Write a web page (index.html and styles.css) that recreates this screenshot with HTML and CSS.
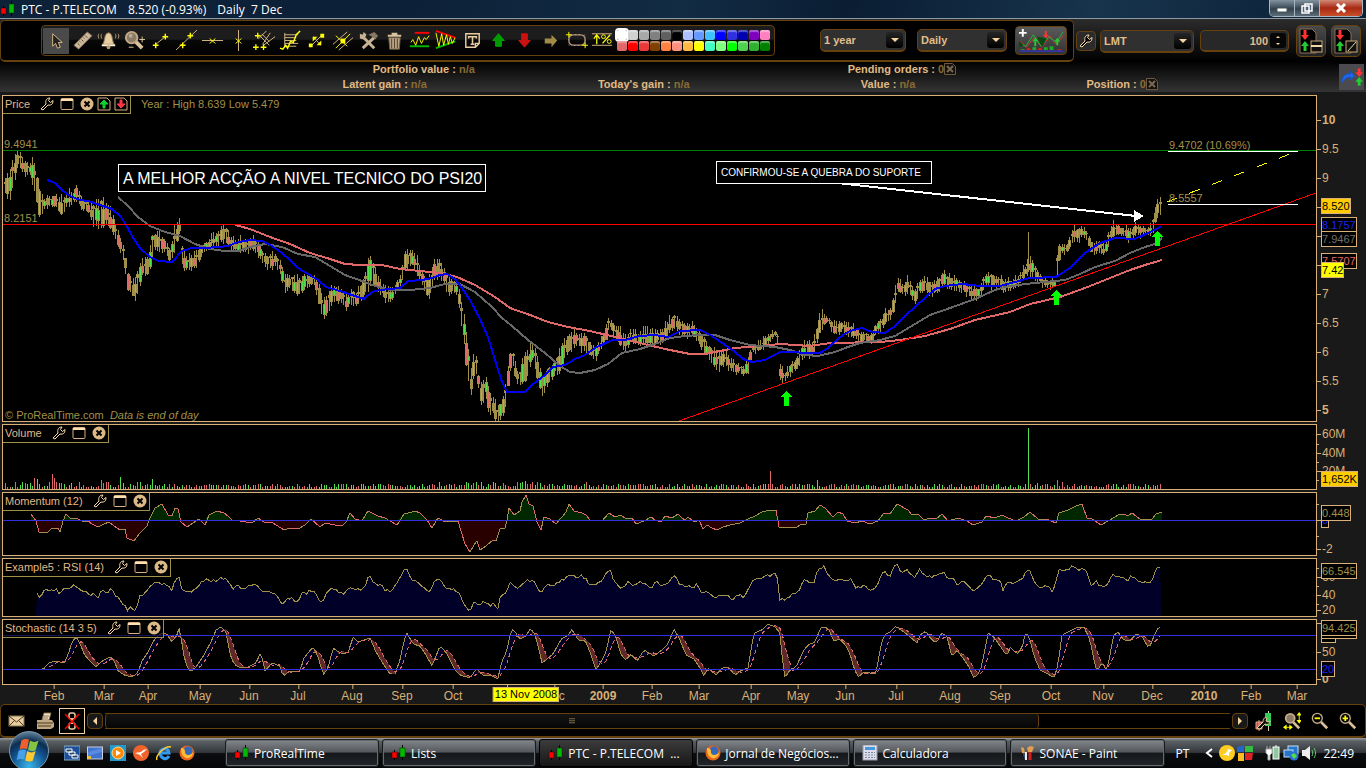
FILE: index.html
```html
<!DOCTYPE html>
<html lang="en">
<head>
    <meta charset="UTF-8">
    <meta name="viewport" content="width=device-width, initial-scale=1.0">
    <title>PTC - P.TELECOM</title>
    <link rel="stylesheet" href="styles.css">
</head>
<body>
    <!-- icon set -->
    <svg class="icon-defs" width="0" height="0" aria-hidden="true">
        <symbol id="i-app" viewBox="0 0 16 16"><path d="M3.5 5v10M11.5 0v15" stroke="#000"/><rect x="1" y="7" width="5" height="6" fill="#f00" stroke="#300" stroke-width=".5"/><rect x="9" y="3" width="5" height="9" fill="#0b0" stroke="#030" stroke-width=".5"/></symbol>
        <symbol id="i-cursor" viewBox="0 0 24 24"><path d="M8 5v13l3-3 2 5 3-1-2-5h4z" fill="#222" stroke="#d8b888"/></symbol>
        <symbol id="i-ruler" viewBox="0 0 24 24"><path d="M3 17L17 3l5 4L8 21z" fill="#cdb79a" stroke="#74624a"/><path d="M7 15l2 2M9 13l1 1M11 11l2 2M13 9l1 1M15 7l2 2" stroke="#443"/></symbol>
        <symbol id="i-bell" viewBox="0 0 24 24"><path d="M12 4c-5 1-3 7-6 12h12c-3-5-1-11-6-12z" fill="#e8cda0" stroke="#8a7355"/><path d="M5 17h14" stroke="#fff0d0" stroke-width="2"/><circle cx="12" cy="19" r="2" fill="#b89a70"/><path d="M5 5c-1 1-1 3 0 5M2 5c-1 1-1 3 0 5M19 5c1 1 1 3 0 5M22 5c1 1 1 3 0 5" fill="none" stroke="#b89a70"/></symbol>
        <symbol id="i-lens" viewBox="0 0 24 24"><path d="M13 13l7 7" stroke="#d9c09a" stroke-width="4"/><circle cx="9" cy="9" r="6" fill="#8b7a66" stroke="#c4ab88" stroke-width="2"/><circle cx="8" cy="7" r="2" fill="#bbaa90"/><path d="M20 8v6M17 11h6M6 19h5" stroke="#e8cda0"/></symbol>
        <symbol id="i-seg" viewBox="0 0 24 24"><path d="M7 16L17 8" stroke="#d8b888"/><path d="M4 17h6M7 14v6M14 8h6M17 5v6" stroke="#ff0" stroke-width="1.5"/></symbol>
        <symbol id="i-line" viewBox="0 0 24 24"><path d="M1 22L23 1" stroke="#d8b888"/><path d="M5 17h6M8 14v6M13 7h6M16 4v6" stroke="#ff0" stroke-width="1.5"/></symbol>
        <symbol id="i-hline" viewBox="0 0 24 24"><path d="M1 12h22" stroke="#d8b888"/><path d="M9 10l6 5M9 15l6-5" stroke="#ff0"/></symbol>
        <symbol id="i-vline" viewBox="0 0 24 24"><path d="M12 1v22" stroke="#d8b888"/><path d="M9 10l6 5M9 15l6-5" stroke="#ff0"/></symbol>
        <symbol id="i-fork" viewBox="0 0 24 24"><path d="M6 10L14 2M8 8l9 9M11 17L23 8M9 5l8 8M10 16L18 4" stroke="#d8b888"/><path d="M2 7h6M5 4v6M0 19h6M3 16v6M8 19h6M11 16v6" stroke="#ff0" stroke-width="1.4"/></symbol>
        <symbol id="i-note" viewBox="0 0 24 24"><path d="M6 6h14M6 9h12M6 12h12M6 15h14M6 18h12M6 4v15" stroke="#d8b888"/><path d="M1 20l3 1 3-4 2 3 3-7 3 1 3-8 4-4" fill="none" stroke="#ff0" stroke-width="1.5"/></symbol>
        <symbol id="i-arrows" viewBox="0 0 24 24"><path d="M6 18L18 6M9 8l7 9" stroke="#d8b888"/><path d="M4 15h4v4H4zM16 5h4v4h-4zM8 8h5l-5 5zM12 17l5-5v5z" fill="#ff0"/></symbol>
        <symbol id="i-channel" viewBox="0 0 24 24"><path d="M2 16L17 3M8 22L23 9" stroke="#d8b888"/><path d="M5 20L20 5M5 7l12 11" stroke="#ff0"/><path d="M10 10h5v5h-5z" fill="#ff0"/></symbol>
        <symbol id="i-tools" viewBox="0 0 24 24"><path d="M5 7l13 13M19 8L6 20" stroke="#c9b396" stroke-width="3"/><path d="M3 5l3 1 1-3 3 3-3 5-4-1z" fill="#c9b396"/><path d="M12 6l6-3 4 4-3 4-3-3z" fill="#877765"/></symbol>
        <symbol id="i-trash" viewBox="0 0 24 24"><path d="M6 9h12l-1 12H7z" fill="#b7a184" stroke="#6a5a44"/><path d="M9 10v10M12 10v10M15 10v10" stroke="#54452f"/><path d="M5 7h14M9 5h6" stroke="#d9c2a0" stroke-width="2"/></symbol>
        <symbol id="i-support" viewBox="0 0 24 24"><path d="M6 4h15" stroke="#f00" stroke-width="2"/><path d="M1 18h20" stroke="#0b0" stroke-width="2"/><path d="M2 14l2-3 3 6 3-9 3 7 3-6 2 2 3-4" fill="none" stroke="#ff0"/></symbol>
        <symbol id="i-triangle" viewBox="0 0 24 24"><path d="M1 2l20 7" stroke="#f00" stroke-width="2"/><path d="M1 20l20-7" stroke="#0b0" stroke-width="2"/><path d="M1 4l3 14L7 5l2 12 3-11 2 10 2-8 2 7 3-6" fill="none" stroke="#ff0"/></symbol>
        <symbol id="i-text" viewBox="0 0 24 24"><path d="M5 5h14v10l-4 4H5zM19 15h-4v4" fill="none" stroke="#e8cda0" stroke-width="1.5"/><path d="M8 10V8h8v2M12 8v8M10 16h4" fill="none" stroke="#e8cda0" stroke-width="1.6"/></symbol>
        <symbol id="i-up" viewBox="0 0 24 24"><path d="M12 5l6 7h-3v6H9v-6H6z" fill="#090" stroke="#0a0"/></symbol>
        <symbol id="i-down" viewBox="0 0 24 24"><path d="M12 19l6-7h-3V5H9v7H6z" fill="#c11" stroke="#c11"/></symbol>
        <symbol id="i-right" viewBox="0 0 24 24"><path d="M19 12l-6-6v4H6v5h7v4z" fill="#a08c48"/></symbol>
        <symbol id="i-ellipse" viewBox="0 0 24 24"><rect x="4" y="6" width="17" height="11" rx="5" fill="none" stroke="#b89a80" stroke-width="1.6"/><path d="M4 6h17v11H4z" fill="none" stroke="#665544" stroke-dasharray="2"/><path d="M1 6h6M4 3v6M18 17h6M21 14v6" stroke="#ff0"/></symbol>
        <symbol id="i-percent" viewBox="0 0 24 24"><path d="M1 5h21M1 17h21" stroke="#d8b888"/><path d="M6 16V7M3 10l3-4 3 4M12 15l8-9" fill="none" stroke="#ff0" stroke-width="1.3"/><circle cx="13" cy="8" r="2" fill="none" stroke="#ff0"/><circle cx="19" cy="13" r="2" fill="none" stroke="#ff0"/></symbol>
        <symbol id="i-wrench" viewBox="0 0 14 14"><path d="M1 12l5-5c-1-4 1-6 4-6L8.500 3.500l2 2L13 3.500c0 4-2 5-5 4.500l-5 5z" fill="#000" stroke="#ffdca8"/></symbol>
        <symbol id="i-window" viewBox="0 0 14 14"><rect x="1" y="1.500" width="12" height="11" rx="1" fill="#000" stroke="#d8b080"/><path d="M1 3h12" stroke="#ffe0b0" stroke-width="2"/></symbol>
        <symbol id="i-close" viewBox="0 0 14 14"><circle cx="7" cy="7" r="6.500" fill="#dcb987"/><path d="M4.500 4.500l5 5M9.500 4.500l-5 5" stroke="#000" stroke-width="2"/></symbol>
        <symbol id="i-buy" viewBox="0 0 14 14"><path d="M1 1h9l3 3v9H1z" fill="#000" stroke="#d8b080"/><path d="M7 3l4 4H8v4H6V7H3z" fill="#1c3" stroke="#1c3"/></symbol>
        <symbol id="i-sell" viewBox="0 0 14 14"><path d="M1 1h9l3 3v9H1z" fill="#000" stroke="#d8b080"/><path d="M7 11l4-4H8V3H6v4H3z" fill="#f34" stroke="#f34"/></symbol>
        <symbol id="i-cancel" viewBox="0 0 12 12"><path d="M.5.5h8l3 3v8H.5z" fill="#15120e" stroke="#6d5a42"/><path d="M3 3l6 6M9 3L3 9" stroke="#7a6852" stroke-width="2"/></symbol>
        <symbol id="i-chart" viewBox="0 0 46 24"><path d="M0 12l8 7 8-10 8 10 8-12 7 9 7-9" fill="none" stroke="#d33"/><path d="M0 15l7 3 8-12 8 12 8-10 8 6 7-11" fill="none" stroke="#2b3"/><path d="M19 8l5 11 5-9zM0 12l5 5-5 2z" fill="#064a12"/><path d="M28 2v5" stroke="#f33" stroke-width="2"/><path d="M25 6h6l-3 4z" fill="#f33"/><path d="M17 18v-5M40 17v-5" stroke="#2c3" stroke-width="2"/><path d="M14 13h6l-3-4zM37 13h6l-3-4z" fill="#2c3"/><path d="M4 22v-1M16 22v-3M34 22v-4M28 22v-3" stroke="#2a2" stroke-width="4"/><path d="M10 22v-2M22 22v-2M42 22v-1" stroke="#d22" stroke-width="4"/><path d="M0 23h46" stroke="#33f"/><path d="M4 0v8M0 4h8" stroke="#fff" stroke-width="2"/></symbol>
        <symbol id="i-order" viewBox="0 0 24 26"><path d="M1 1h12l4 4v20H1z" fill="#000" stroke="#8a7050"/><path d="M6 2v5" stroke="#f33" stroke-width="3"/><path d="M2 7h8l-4 5z" fill="#f33"/><path d="M6 23v-5" stroke="#2c3" stroke-width="3"/><path d="M2 18h8l-4-5z" fill="#2c3"/></symbol>
        <symbol id="i-trade" viewBox="0 0 24 24"><path d="M2 18c0-8 5-10 9-9V6l4 5-4 4v-3c-4 0-6 2-9 6z" fill="#26e" stroke="#15c"/><path d="M20 3v5" stroke="#f33" stroke-width="3"/><path d="M16 7h8l-4 5z" fill="#f33"/><path d="M20 21v-5" stroke="#2c3" stroke-width="3"/><path d="M16 17h8l-4-5z" fill="#2c3"/></symbol>
        <symbol id="i-mail" viewBox="0 0 18 18"><rect x="1" y="4" width="15" height="10" fill="#e8cda0" stroke="#8c7450"/><path d="M1 4l7.500 6L16 4M1 14l5-5M16 14l-5-5" fill="none" stroke="#4a3a20"/></symbol>
        <symbol id="i-print" viewBox="0 0 18 18"><path d="M6 8l2-7h7l-2 7z" fill="#f5e4c8" stroke="#86704e"/><path d="M8 4h5M7 6h5" stroke="#86704e"/><path d="M1 8h15l2 3v4l-3 2H1z" fill="#c0a884"/><path d="M1 11h16M2 14h13" stroke="#4a3a20"/></symbol>
        <symbol id="i-unlink" viewBox="0 0 18 18"><rect x="6" y="1" width="6" height="6" rx="2" fill="none" stroke="#e8cda0" stroke-width="1.500"/><rect x="6" y="11" width="6" height="6" rx="2" fill="none" stroke="#e8cda0" stroke-width="1.500"/><path d="M9 6v6" stroke="#e8cda0" stroke-width="2"/><path d="M2 2l14 15M16 2L2 17" stroke="#f00" stroke-width="1.300"/></symbol>
        <symbol id="i-candles" viewBox="0 0 18 20"><path d="M13.500 0v20" stroke="#e8cda0"/><path d="M10 2h6v13h-6z" fill="#3c5"/><path d="M1 11h6v7H1zM4 9v11" fill="#c55" stroke="#d8a888"/><path d="M2 17l6-6c0-4 2-5 4-4l-1 3 2 1 2-1c0 3-2 4-5 3l-5 5z" fill="#111" stroke="#e8cda0"/></symbol>
        <symbol id="i-fit" viewBox="0 0 20 20"><path d="M11 11l7 7" stroke="#d9c09a" stroke-width="3"/><circle cx="8" cy="7" r="5" fill="#8b7a66" stroke="#c4ab88" stroke-width="2"/><path d="M18 2v8M1 17h8" stroke="#ff0"/><path d="M15 4l3-4 3 4zM15 9l3 4 3-4zM4 14l-4 3 4 3zM7 14l4 3-4 3z" fill="#ff0"/></symbol>
        <symbol id="i-zoomout" viewBox="0 0 20 20"><path d="M11 11l7 7" stroke="#d9c09a" stroke-width="3"/><circle cx="7" cy="7" r="5.500" fill="#000" stroke="#c4ab88" stroke-width="1.500"/><path d="M4 7h6" stroke="#ff0" stroke-width="2"/></symbol>
        <symbol id="i-zoomin" viewBox="0 0 20 20"><path d="M11 11l7 7" stroke="#d9c09a" stroke-width="3"/><circle cx="7" cy="7" r="5.500" fill="#000" stroke="#c4ab88" stroke-width="1.500"/><path d="M4 7h6M7 4v6" stroke="#ff0" stroke-width="2"/></symbol>
        <symbol id="i-flag" viewBox="0 0 40 40"><path d="M12 9c3-2 6-2 8-1l-2 10c-3-1-6-1-8 1z" fill="#f0602a"/><path d="M21 9c3 2 6 2 9 0l-3 10c-2 2-5 1-8 0z" fill="#86c440"/><path d="M9 20c3-2 6-2 8-1l-2 10c-3-1-6-1-8 1z" fill="#4aa0e8"/><path d="M18 20c3 2 6 2 9 0l-3 10c-2 2-5 1-8 0z" fill="#fcc830"/></symbol>
        <symbol id="i-switch" viewBox="0 0 16 16"><rect width="16" height="14" y="1" fill="#1c4f9c" stroke="#8ab"/><path d="M2 4h6v3H2zM5 7h6v3H5zM8 10h6v3H8z" fill="#246" stroke="#fff"/></symbol>
        <symbol id="i-desktop" viewBox="0 0 16 16"><rect x=".5" y="2" width="15" height="12" fill="#3d74d0" stroke="#ccd"/><path d="M1 7l14-4v4L1 11z" fill="#5a8ae0"/><path d="M1 11h3v3H1z" fill="#eb3"/></symbol>
        <symbol id="i-wmp" viewBox="0 0 16 16"><rect width="16" height="16" fill="#29c"/><circle cx="8" cy="8" r="6" fill="#f80" stroke="#fd9"/><path d="M6 5l5 3-5 3z" fill="#fff"/></symbol>
        <symbol id="i-kite" viewBox="0 0 16 16"><circle cx="8" cy="8" r="8" fill="#f0632a"/><path d="M2 8c4-1 6 0 8-3l4-1-3 3-3 2 2 4-3-3z" fill="#fff"/></symbol>
        <symbol id="i-ie" viewBox="0 0 16 16"><path d="M13 11c-3 5-9 2-9-3s8-6 9 0H5" fill="none" stroke="#39e" stroke-width="3"/><path d="M1 15C-1 11 9 0 15 2" fill="none" stroke="#fc3" stroke-width="1.500"/></symbol>
        <symbol id="i-firefox" viewBox="0 0 16 16"><circle cx="8" cy="8" r="7.500" fill="#e8641c"/><circle cx="9" cy="6" r="4.500" fill="#3468b8"/><path d="M2 3c3 0 4 1 4 4 0 4 6 4 8 0 0 5-4 7-7 6S2 9 2 3z" fill="#fb3"/></symbol>
        <symbol id="i-calc" viewBox="0 0 16 16"><rect x="1" width="14" height="15" fill="#dde" stroke="#99a"/><rect x="3" y="2" width="10" height="3" fill="#49d"/><path d="M3 7.500h10M3 10h10M3 12.500h10" stroke="#789" stroke-dasharray="2 1"/></symbol>
        <symbol id="i-paint" viewBox="0 0 16 16"><path d="M4 6l3 9" stroke="#357" stroke-width="2"/><path d="M11 7v8" stroke="#c22" stroke-width="3"/><path d="M2 2l3 1 1 5H3zM9 7L8 3l3-2 4 1-2 5z" fill="#e0a050"/><path d="M7 7v8" stroke="#eee" stroke-width="2"/></symbol>
        <symbol id="i-globe" viewBox="0 0 16 16"><circle cx="8" cy="8" r="8" fill="#fc2"/><path d="M3 10c4-1 5-3 6-6l4 1-3 3v3l-3-1z" fill="#fff"/></symbol>
        <symbol id="i-squares" viewBox="0 0 16 16"><path d="M0 2l7-2v7H0z" fill="#26c"/><path d="M8 1h8v6H8z" fill="#3b4"/><path d="M1 8h6v8H1z" fill="#fb2"/><path d="M8 8h8l-1 7H8z" fill="#d22"/></symbol>
        <symbol id="i-power" viewBox="0 0 16 16"><rect x="8" y="2" width="6" height="12" fill="#8fc89f" stroke="#fff"/><path d="M10 1h2" stroke="#fff"/><path d="M1 4h6v4l-2 2v5H3v-5L1 8zM2 1v3M5 1v3" fill="#fff" stroke="#aaa"/></symbol>
        <symbol id="i-net" viewBox="0 0 16 16"><rect x="5" y="1" width="10" height="8" fill="#27c" stroke="#cde"/><rect x="1" y="5" width="9" height="7" fill="#27c" stroke="#cde"/><circle cx="11" cy="11" r="4.500" fill="#2a6fd0"/><path d="M8 10l3-2 3 3-3 3z" fill="#5d4"/></symbol>
        <symbol id="i-sound" viewBox="0 0 16 16"><path d="M1 5h3l5-4v14l-5-4H1z" fill="#eee"/><path d="M11 5c1 2 1 4 0 6M13 3c2 3 2 7 0 10" fill="none" stroke="#6c7"/></symbol>
    </svg>

    <header class="titlebar">
        <svg class="ic16"><use href="#i-app"/></svg>
        <h1 class="title">PTC - P.TELECOM <span>8.520 (-0.93%)</span> <span>Daily&nbsp; 7 Dec</span></h1>
        <div class="win-buttons">
            <button class="win-min" aria-label="Minimize"><svg width="12" height="9"><rect x="1" y="4" width="10" height="4" fill="#fff" stroke="#455"/></svg></button>
            <button class="win-max" aria-label="Restore"><svg width="12" height="11"><path d="M4 1h7v7H4zM1 3h7v7H1z" fill="#567" stroke="#fff" stroke-width="1.5"/></svg></button>
            <button class="win-close" aria-label="Close"><svg width="12" height="10"><path d="M2 1l8 8M10 1L2 9" stroke="#fff" stroke-width="3"/></svg></button>
        </div>
    </header>

    <div class="toolbar">
        <div class="tool-group">
            <div class="tool-strip">
                <button class="tool active" aria-label="Select"><svg><use href="#i-cursor"/></svg></button>
                <button class="tool" aria-label="Ruler"><svg><use href="#i-ruler"/></svg></button>
                <button class="tool" aria-label="Alert"><svg><use href="#i-bell"/></svg></button>
                <button class="tool" aria-label="Zoom"><svg><use href="#i-lens"/></svg></button>
                <button class="tool" aria-label="Segment"><svg><use href="#i-seg"/></svg></button>
                <button class="tool" aria-label="Line"><svg><use href="#i-line"/></svg></button>
                <button class="tool" aria-label="Horizontal line"><svg><use href="#i-hline"/></svg></button>
                <button class="tool" aria-label="Vertical line"><svg><use href="#i-vline"/></svg></button>
                <button class="tool" aria-label="Pitchfork"><svg><use href="#i-fork"/></svg></button>
                <button class="tool" aria-label="Fibonacci"><svg><use href="#i-note"/></svg></button>
                <button class="tool" aria-label="Projection"><svg><use href="#i-arrows"/></svg></button>
                <button class="tool" aria-label="Channel"><svg><use href="#i-channel"/></svg></button>
                <button class="tool" aria-label="Settings"><svg><use href="#i-tools"/></svg></button>
                <button class="tool" aria-label="Delete"><svg><use href="#i-trash"/></svg></button>
                <button class="tool" aria-label="Supports"><svg><use href="#i-support"/></svg></button>
                <button class="tool" aria-label="Triangle"><svg><use href="#i-triangle"/></svg></button>
                <button class="tool" aria-label="Text"><svg><use href="#i-text"/></svg></button>
                <button class="tool" aria-label="Up arrow"><svg><use href="#i-up"/></svg></button>
                <button class="tool" aria-label="Down arrow"><svg><use href="#i-down"/></svg></button>
                <button class="tool" aria-label="Right arrow"><svg><use href="#i-right"/></svg></button>
                <button class="tool" aria-label="Ellipse"><svg><use href="#i-ellipse"/></svg></button>
                <button class="tool" aria-label="Percent"><svg><use href="#i-percent"/></svg></button>
                <div class="swatches" id="swatches"></div>
            </div>
            <label class="pick pick-year"><select aria-label="Period"><option>1 year</option></select></label>
            <label class="pick pick-unit"><select aria-label="Time unit"><option>Daily</option></select></label>
            <button class="chart-button" aria-label="Indicators"><svg><use href="#i-chart"/></svg></button>
        </div>
        <div class="order-group">
            <button class="wrench-button" aria-label="Order settings"><svg><use href="#i-wrench"/></svg></button>
            <label class="pick pick-type"><select aria-label="Order type"><option>LMT</option></select></label>
            <label class="qty"><input type="text" value="100" aria-label="Quantity"><span class="spin"></span></label>
            <button class="order-button" aria-label="Close order"><svg><use href="#i-order"/><rect x="12" y="13" width="11" height="11" fill="#111" stroke="#c9a878"/><path d="M12 18h11" stroke="#f0d8a8" stroke-width="2"/></svg></button>
            <button class="order-button" aria-label="Edit order"><svg><use href="#i-order"/><rect x="12" y="13" width="11" height="11" fill="#111" stroke="#c9a878"/><path d="M14 23l8-9" stroke="#f0d8a8"/></svg></button>
        </div>
    </div>

    <div class="summary">
        <div class="summary-rows">
            <div class="summary-row">
                <span>Portfolio value : <i>n/a</i></span>
                <span>Pending orders : <i>0</i><svg><use href="#i-cancel"/></svg></span>
            </div>
            <div class="summary-row">
                <span></span>
                <span>Latent gain : <i>n/a</i></span>
                <span>Today's gain : <i>n/a</i></span>
                <span>Value : <i>n/a</i></span>
                <span>Position : <i>0</i><svg><use href="#i-cancel"/></svg></span>
            </div>
        </div>
        <button class="trade-button" aria-label="Trade"><svg><use href="#i-trade"/></svg></button>
    </div>

    <main class="charts">
        <section class="row row-price">
            <div class="panel">
                <svg class="plot" id="price" viewBox="3 96 1313 325" preserveAspectRatio="none"></svg>
                <div class="panel-head">
                    <h2>Price</h2>
                    <svg><use href="#i-wrench"/></svg><svg><use href="#i-window"/></svg><svg><use href="#i-close"/></svg><svg class="tight"><use href="#i-buy"/></svg><svg class="tight"><use href="#i-sell"/></svg>
                </div>
                <span class="note olive" data-x="141" data-y="98">Year : High 8.639 Low 5.479</span>
                <span class="note olive" data-x="4" data-y="138">9.4941</span>
                <span class="note olive" data-x="4" data-y="212">8.2151</span>
                <span class="note olive" data-x="1169" data-y="139">9.4702 (10.69%)</span>
                <span class="note olive" data-x="1169" data-y="192">8.5557</span>
                <span class="note boxed big" data-x="118" data-y="164">A MELHOR ACÇÃO A NIVEL TECNICO DO PSI20</span>
                <span class="note boxed" data-x="716" data-y="161">CONFIRMOU-SE A QUEBRA DO SUPORTE</span>
                <span class="note olive" data-x="5" data-y="409">© ProRealTime.com&nbsp; <em>Data is end of day</em></span>
            </div>
            <div class="axis" data-top="95" data-height="327" data-ticks="120:10:b 149:9.5 178:9 207: 236: 265: 294:7 323:6.5 352:6 381:5.5 410:5:b" data-badges="206:8.520:orange 225:8.1757:blue 239:7.9467:gray 261:7.5707:pink 270:7.42:yellow"></div>
        </section>
        <section class="row row-volume">
            <div class="panel">
                <svg class="plot" id="volume" viewBox="3 425 1313 64" preserveAspectRatio="none"></svg>
                <div class="panel-head"><h2>Volume</h2><svg><use href="#i-wrench"/></svg><svg><use href="#i-window"/></svg><svg><use href="#i-close"/></svg></div>
            </div>
            <div class="axis" data-top="424" data-height="66" data-ticks="434:60M 444::s 453:40M 462::s 471:20M 480::s" data-badges="479:1,652K:orange"></div>
        </section>
        <section class="row row-momentum">
            <div class="panel">
                <svg class="plot" id="momentum" viewBox="3 493 1313 62" preserveAspectRatio="none"></svg>
                <div class="panel-head"><h2>Momentum (12)</h2><svg><use href="#i-wrench"/></svg><svg><use href="#i-window"/></svg><svg><use href="#i-close"/></svg></div>
            </div>
            <div class="axis" data-top="492" data-height="64" data-ticks="504::s 520: 536::s 549:-2" data-badges="520:0:blue 513:0.448:olive"></div>
        </section>
        <section class="row row-rsi">
            <div class="panel">
                <svg class="plot" id="rsi" viewBox="3 559 1313 57" preserveAspectRatio="none"></svg>
                <div class="panel-head"><h2>Example5 : RSI (14)</h2><svg><use href="#i-wrench"/></svg><svg><use href="#i-window"/></svg><svg><use href="#i-close"/></svg></div>
            </div>
            <div class="axis" data-top="558" data-height="59" data-ticks="568::s 577:60 586::s 595:40 604::s 610:20" data-badges="571:66.545:olive"></div>
        </section>
        <section class="row row-stoch">
            <div class="panel">
                <svg class="plot" id="stoch" viewBox="3 620 1313 64" preserveAspectRatio="none"></svg>
                <div class="panel-head"><h2>Stochastic (14 3 5)</h2><svg><use href="#i-wrench"/></svg><svg><use href="#i-window"/></svg><svg><use href="#i-close"/></svg></div>
            </div>
            <div class="axis" data-top="619" data-height="66" data-ticks="623: 652:50 679:0:b" data-badges="635::short 631::long 628:94.425:olive 669:20:blue"></div>
        </section>
        <div class="time-axis" id="timeAxis"></div>
    </main>

    <div class="bottombar">
        <button class="bb" aria-label="Mail"><svg><use href="#i-mail"/></svg></button>
        <button class="bb" aria-label="Print"><svg><use href="#i-print"/></svg></button>
        <button class="bb framed" aria-label="Unlink"><svg><use href="#i-unlink"/></svg></button>
        <div class="scroll">
            <button class="scroll-arrow left" aria-label="Scroll left"></button>
            <div class="scroll-track"><div class="scroll-thumb"><span></span></div></div>
            <button class="scroll-arrow right" aria-label="Scroll right"></button>
        </div>
        <button class="bb" aria-label="Chart style"><svg><use href="#i-candles"/></svg></button>
        <button class="bb" aria-label="Fit"><svg><use href="#i-fit"/></svg></button>
        <button class="bb" aria-label="Zoom out"><svg><use href="#i-zoomout"/></svg></button>
        <button class="bb" aria-label="Zoom in"><svg><use href="#i-zoomin"/></svg></button>
    </div>

    <footer class="taskbar">
        <button class="start" aria-label="Start"><svg><use href="#i-flag"/></svg></button>
        <div class="quick">
            <svg class="ic16"><use href="#i-switch"/></svg><svg class="ic16"><use href="#i-desktop"/></svg><svg class="ic16"><use href="#i-wmp"/></svg><svg class="ic16"><use href="#i-kite"/></svg><svg class="ic16"><use href="#i-ie"/></svg><svg class="ic16"><use href="#i-firefox"/></svg>
        </div>
        <div class="tasks">
            <button class="task"><svg class="ic16"><use href="#i-app"/></svg>ProRealTime</button>
            <button class="task"><svg class="ic16"><use href="#i-app"/></svg>Lists</button>
            <button class="task current"><svg class="ic16"><use href="#i-app"/></svg>PTC - P.TELECOM &nbsp;...</button>
            <button class="task"><svg class="ic16"><use href="#i-firefox"/></svg>Jornal de Negócios...</button>
            <button class="task"><svg class="ic16"><use href="#i-calc"/></svg>Calculadora</button>
            <button class="task"><svg class="ic16"><use href="#i-paint"/></svg>SONAE - Paint</button>
        </div>
        <div class="tray">
            <span class="lang">PT</span>
            <svg class="chev" width="8" height="10"><path d="M7 1L2 5l5 4" fill="none" stroke="#fff" stroke-width="2"/></svg>
            <svg class="ic16"><use href="#i-globe"/></svg><svg class="ic16"><use href="#i-squares"/></svg>
            <svg class="ic16 sep"><use href="#i-power"/></svg><svg class="ic16"><use href="#i-net"/></svg><svg class="ic16"><use href="#i-sound"/></svg>
            <span class="clock">22:49</span>
        </div>
    </footer>
    <script src="charts.js"></script>
</body>
</html>
```
FILE: styles.css
```css
* {
    margin: 0;
    padding: 0;
    box-sizing: border-box;
}
body {
    display: flex;
    flex-direction: column;
    height: 100vh;
    min-height: 640px;
    background: #191919;
    color: #d8b078;
    font: 11px "Liberation Sans", Arial, sans-serif;
    overflow: hidden;
}
button {
    background: none;
    border: none;
    color: inherit;
    font: inherit;
}
svg {
    display: block;
    flex: none;
}
.icon-defs {
    position: absolute;
}
.ic16 {
    width: 16px;
    height: 16px;
}

/* title bar */
.titlebar {
    display: flex;
    align-items: center;
    height: 19px;
    background: linear-gradient(100deg, #0d2238 0%, #0c2138 30%, #122c44 50%, #0a1d33 62%, #17344c 80%, #0b1f35 100%);
    border-bottom: 1px solid #8d9aa5;
}
.title {
    flex: 1;
    margin-left: 5px;
    color: #fff;
    font: 12px "Open Sans", "Segoe UI", sans-serif;
}
.title span {
    margin-left: 8px;
}
.win-buttons {
    display: flex;
    align-self: flex-start;
    height: 17px;
    margin-right: 3px;
    border: 1px solid #a9b5bf;
    border-top: none;
    border-radius: 0 0 5px 5px;
    overflow: hidden;
}
.win-buttons button {
    display: flex;
    align-items: center;
    justify-content: center;
    width: 25px;
    background: linear-gradient(#8493a0, #33424f 55%, #5d6c79);
    border-right: 1px solid #a9b5bf;
}
.win-buttons .win-close {
    width: 42px;
    border: none;
    background: linear-gradient(#d08a78, #a82812 50%, #c8502c);
}

/* toolbar */
.toolbar {
    display: flex;
    height: 43px;
    padding-top: 1px;
    background: linear-gradient(#2c2c2c, #000);
}
.tool-group {
    display: flex;
    align-items: center;
    width: 1074px;
    padding: 0 6px 0 40px;
    background: #000;
    border: 1px solid #65410f;
    border-bottom-width: 2px;
    border-radius: 5px;
}
.tool-strip {
    display: flex;
    align-items: center;
    height: 31px;
    padding: 0 4px 0 1px;
    background: linear-gradient(#1c1c1c 45%, #080808 50%, #000);
    border: 1px solid #65410f;
    border-radius: 4px;
}
.tool {
    display: flex;
    align-items: center;
    justify-content: center;
    width: 26px;
    height: 26px;
}
.tool.active {
    background: #4a4a4a;
}
.tool svg {
    width: 23px;
    height: 23px;
}
.swatches {
    display: grid;
    grid-template-columns: repeat(14, 10px);
    gap: 1px;
    margin-left: 2px;
}
.swatch {
    height: 10px;
    border-radius: 2px;
    box-shadow: inset 0 2px 1px rgba(255, 255, 255, .35);
}
.swatch.chosen {
    outline: 2px solid #fff;
}
.pick {
    position: relative;
    height: 23px;
    border: 1px solid #65410f;
    border-bottom-width: 2px;
    border-radius: 5px;
    background: #303030;
}
.pick select {
    width: 100%;
    height: 100%;
    padding-left: 3px;
    appearance: none;
    background: none;
    border: none;
    color: #e2bd88;
    font: bold 11px "Liberation Sans", Arial, sans-serif;
}
.pick::before {
    content: "";
    position: absolute;
    top: 2px;
    right: 2px;
    width: 17px;
    height: 16px;
    background: linear-gradient(#252525, #000);
    border-radius: 3px;
    pointer-events: none;
}
.pick::after {
    content: "";
    position: absolute;
    top: 8px;
    right: 6px;
    border: 4px solid transparent;
    border-top-color: #f5d5a0;
    border-bottom: none;
    pointer-events: none;
}
.pick-year {
    width: 86px;
    margin-left: auto;
}
.pick-unit {
    width: 90px;
    margin: 0 8px 0 11px;
}
.pick-type {
    width: 94px;
    margin: 0 6px 0 4px;
}
.chart-button {
    padding: 2px;
    background: linear-gradient(#5a5a5a, #333);
    border: 1px solid #65410f;
    border-radius: 4px;
}
.chart-button svg {
    width: 46px;
    height: 23px;
}
.order-group {
    display: flex;
    align-items: center;
    flex: 1;
    padding-left: 2px;
}
.wrench-button {
    padding: 2px;
    background: #2b2b2b;
    border: 1px solid #65410f;
    border-radius: 4px;
}
.wrench-button svg {
    width: 14px;
    height: 14px;
}
.qty {
    display: flex;
    align-items: center;
    width: 89px;
    height: 22px;
    margin-right: 7px;
    padding-right: 2px;
    background: #282828;
    border: 1px solid #65410f;
    border-bottom-width: 2px;
    border-radius: 5px;
}
.qty input {
    flex: 1;
    min-width: 0;
    padding-right: 2px;
    background: none;
    border: none;
    color: #e2bd88;
    font: bold 11px "Liberation Sans", Arial, sans-serif;
    text-align: right;
}
.spin {
    display: flex;
    flex-direction: column;
    align-items: center;
    justify-content: space-around;
    width: 16px;
    height: 15px;
    background: #060606;
    border-radius: 3px;
}
.spin::before,
.spin::after {
    content: "";
    border: 2px solid transparent;
    border-bottom-color: #f5d5a0;
    border-top: none;
}
.spin::after {
    border-top: 2px solid #f5d5a0;
    border-bottom: none;
}
.order-button {
    margin-right: 5px;
    padding: 2px;
    background: linear-gradient(#4a4a4a, #222);
    border: 1px solid #65410f;
    border-radius: 5px;
}
.order-button svg {
    width: 24px;
    height: 26px;
}

/* account summary */
.summary {
    display: flex;
    height: 30px;
    background: linear-gradient(#020202, #343434);
}
.summary-rows {
    flex: 1;
    padding-right: 8px;
}
.summary-row {
    display: flex;
    justify-content: space-evenly;
    height: 15px;
    color: #e0ba84;
    font-size: 11px;
    font-weight: bold;
    line-height: 15px;
}
.summary-row span {
    display: flex;
    white-space: pre;
}
.summary-row i {
    color: #8a6b32;
    font-style: normal;
}
.summary-row svg {
    width: 12px;
    height: 12px;
    margin-top: 1px;
}
.trade-button {
    align-self: flex-end;
    margin: 0 2px 2px;
    padding: 1px;
    background: #4b4b4f;
}
.trade-button svg {
    width: 23px;
    height: 24px;
}

/* charts */
.charts {
    display: flex;
    flex: 1;
    flex-direction: column;
    gap: 2px;
    min-height: 0;
    padding: 3px 0 0 2px;
}
.row {
    display: grid;
    grid-template-columns: 1fr 49px;
    grid-template-rows: 100%;
}
.row-price {
    flex: 1;
    min-height: 0;
}
.row-volume,
.row-stoch {
    height: 66px;
}
.row-momentum {
    height: 64px;
}
.row-rsi {
    height: 59px;
}
.panel {
    position: relative;
    background: #000;
    border: 1px solid #d8b078;
}
.plot {
    width: 100%;
    height: 100%;
    shape-rendering: crispEdges;
}
.panel-head {
    position: absolute;
    top: 0;
    left: 0;
    display: flex;
    align-items: center;
    height: 18px;
    padding: 0 2px 1px;
    background: rgba(0, 0, 0, .6);
    border: solid #a09048;
    border-width: 0 1px 1px 0;
}
.panel-head h2 {
    margin-right: 4px;
    color: #e0b888;
    font-size: 11px;
    font-weight: normal;
}
.panel-head svg {
    width: 14px;
    height: 14px;
    margin-left: 6px;
}
.panel-head .tight {
    margin-left: 3px;
}
.note {
    position: absolute;
    white-space: nowrap;
    font-size: 11px;
    line-height: 13px;
}
.olive {
    color: #a09048;
}
.boxed {
    padding: 4px 10px 4px 4px;
    background: #000;
    border: 1px solid #fff;
    color: #fff;
    font-size: 10px;
}
.boxed.big {
    padding: 4px 3px 2px 4px;
    font-size: 16px;
    line-height: 20px;
}
.axis {
    position: relative;
    overflow: hidden;
}
.tick,
.badge {
    position: absolute;
    left: 0;
    padding-left: 5px;
    font-size: 12px;
    line-height: 14px;
    min-height: 14px;
    transform: translateY(-50%);
}
.tick::before {
    content: "";
    position: absolute;
    top: 7px;
    left: 0;
    width: 4px;
    height: 1px;
    background: #d8b078;
}
.tick.s::before {
    width: 2px;
}
.tick.b {
    font-weight: bold;
}
.badge {
    left: 4px;
    min-height: 16px;
    padding: 0;
    background: #000;
    border: 1px solid #d8b078;
    font-size: 11px;
}
.badge.orange {
    background: #fc0;
    color: #000;
}
.badge.yellow {
    background: #ff0;
    color: #000;
}
.badge.blue {
    color: #22e;
}
.badge.gray {
    color: #707070;
}
.badge.pink {
    color: #e06868;
}
.badge.short {
    width: 15px;
}
.badge.long {
    width: 36px;
}
.time-axis {
    position: relative;
    height: 19px;
    margin: -2px 50px 0 0;
}
.month {
    position: absolute;
    top: 0;
    padding-top: 4px;
    transform: translateX(-50%);
    font-size: 12px;
    line-height: 15px;
}
.month::before {
    content: "";
    position: absolute;
    top: 0;
    left: 50%;
    width: 1px;
    height: 4px;
    background: #d8b078;
}
.month.year {
    font-weight: bold;
}
.month.date {
    top: 2px;
    padding: 0 1px;
    background: #ff0;
    border: 1px solid #d8b078;
    color: #000;
    font-size: 11px;
    line-height: 13px;
    white-space: nowrap;
}
.month.date::before {
    display: none;
}

/* bottom bar */
.bottombar {
    display: flex;
    align-items: center;
    height: 34px;
    padding: 0 3px 0 2px;
    background: #000;
    border: 1px solid #65410f;
    border-bottom-width: 2px;
    border-radius: 5px;
}
.bb {
    display: flex;
    align-items: center;
    justify-content: center;
    width: 28px;
    height: 26px;
}
.bb svg {
    width: 18px;
    height: 20px;
}
.bb.framed {
    width: 26px;
    border: 1px solid #f0cfa0;
}
.scroll {
    display: flex;
    align-items: center;
    flex: 1;
    gap: 2px;
    margin: 0 2px;
}
.scroll-arrow {
    display: flex;
    align-items: center;
    justify-content: center;
    width: 16px;
    height: 16px;
    background: #181818;
    border: 1px solid #65410f;
    border-radius: 4px;
}
.scroll-arrow::before {
    content: "";
    border: 4px solid transparent;
    border-right-color: #f5d5a0;
    border-left: none;
}
.scroll-arrow.right::before {
    border: 4px solid transparent;
    border-left-color: #f5d5a0;
    border-right: none;
}
.scroll-track {
    flex: 1;
    height: 16px;
    border: solid #65410f;
    border-width: 1px 0;
}
.scroll-thumb {
    display: flex;
    align-items: center;
    justify-content: center;
    width: 83%;
    height: 14px;
    background: linear-gradient(#141414, #060606);
    border: solid #65410f;
    border-width: 0 1px;
    border-radius: 3px;
}
.scroll-thumb span {
    width: 6px;
    height: 6px;
    background: repeating-linear-gradient(#65522f 0 1px, #222 1px 2px);
}

/* taskbar */
.taskbar {
    position: relative;
    display: flex;
    align-items: center;
    height: 30px;
    background: linear-gradient(#9a9fa5, #5b6065 10%, #33373b 48%, #0a0c0e 52%, #050607);
    color: #fff;
    font: 12px "Open Sans", "Segoe UI", sans-serif;
}
.start {
    width: 40px;
    height: 40px;
    margin: -4px 15px 0 9px;
    border: 1px solid #7c98ac;
    border-radius: 50%;
    background: radial-gradient(circle at 50% 90%, #39b4e8, #12508c 45%, #0d2d50 65%, #8fb0c8);
}
.start svg {
    width: 38px;
    height: 38px;
}
.quick {
    display: flex;
    gap: 7px;
    width: 161px;
}
.tasks {
    display: flex;
    flex: 1;
    gap: 3px;
    align-self: stretch;
    padding: 1px 0;
}
.task {
    display: flex;
    align-items: center;
    flex: 1;
    gap: 4px;
    min-width: 0;
    padding-left: 8px;
    background: linear-gradient(#84888c, #55595d 45%, #15181b 52%, #22262a);
    border: 1px solid #1a1c1e;
    box-shadow: inset 0 0 0 1px #666b70;
    border-radius: 3px;
    white-space: nowrap;
    overflow: hidden;
}
.task.current {
    background: linear-gradient(#3c3c3c, #161616);
    box-shadow: none;
    border-color: #000;
}
.tray {
    display: flex;
    align-items: center;
    gap: 2px;
    padding: 0 12px 0 11px;
}
.lang {
    margin-right: 14px;
}
.chev {
    margin-right: 4px;
}
.sep {
    margin-left: 10px;
}
.clock {
    margin-left: 4px;
}
```
FILE: charts.js
```js
// color palette
const palette = ['#fff', '#d0d0d0', '#a8a8a8', '#808080', '#606060', '#000', '#b0c0ff', '#6699ff', '#40c0ff', '#0000ff', '#3030e0', '#0000b0', '#8000c0', '#ff80c0',
    '#e06868', '#f00', '#e83838', '#804000', '#ff8040', '#ff9080', '#ffb840', '#ff0', '#40ffc0', '#80ff80', '#0f0', '#50d050', '#30b030', '#008000'];
const swatches = document.getElementById('swatches');
palette.forEach((color, i) => {
    const b = document.createElement('button');
    b.className = i === 0 ? 'swatch chosen' : 'swatch';
    b.setAttribute('aria-label', 'Color ' + color);
    b.style.background = color;
    swatches.appendChild(b);
});

// "x,y x,y" -> [[x, y], ...]
const parse = text => text.trim().split(/\s+/).map(p => p.split(',').map(Number));

function valueAt(points, x, k = 1) {
    if (x <= points[0][0]) return points[0][k];
    for (let i = 1; i < points.length; i++) {
        const a = points[i - 1], b = points[i];
        if (x <= b[0]) return a[k] + (b[k] - a[k]) * (x - a[0]) / (b[0] - a[0] || 1);
    }
    return points[points.length - 1][k];
}

// repeatable pseudo random numbers
let seed = 7;
function rnd() {
    seed = (seed * 16807) % 2147483647;
    return seed / 2147483647;
}

function add(id, tag, attrs) {
    const el = document.createElementNS('http://www.w3.org/2000/svg', tag);
    for (const k in attrs) el.setAttribute(k, attrs[k]);
    document.getElementById(id).appendChild(el);
}
const line = (id, x1, y1, x2, y2, stroke, more) => add(id, 'line', { x1, y1, x2, y2, stroke, ...more });
const curve = (id, points, stroke, width) => add(id, 'polyline', { points: points.join(' '), fill: 'none', stroke, 'stroke-width': width });

const bars = [];
for (let x = 5; x <= 1162; x += 2.452) bars.push(x);

// daily ranges: x,high,low
const ranges = parse(`5,178,193 10,170,199 14,158,180 18,152,165 24,162,175 30,165,173 33,156,188 36,172,190 38,185,218 42,200,210 50,196,206 58,196,207 60,200,217 66,197,206 76,188,200 82,198,208 88,204,212 92,207,222 98,200,228 101,200,228 107,207,222 113,215,232 118,234,246 124,250,262 127,272,290 131,278,292 134,284,300 138,270,292 143,260,272 148,258,275 151,235,262 155,235,248 160,235,250 165,240,252 170,250,262 175,225,250 179,220,230 182,252,268 188,258,270 193,256,268 197,250,266 203,245,252 210,238,246 217,234,244 223,224,240 228,234,244 232,240,252 238,241,251 243,240,252 250,238,250 257,240,252 262,252,262 268,256,268 275,256,266 280,262,272 284,275,290 290,276,286 296,280,296 302,276,292 308,275,286 314,276,285 319,285,305 323,303,320 328,292,310 334,286,300 340,290,302 346,298,308 352,290,302 357,294,305 362,282,298 366,272,290 370,255,285 375,270,285 380,284,294 386,290,300 391,290,302 396,284,292 401,272,284 405,252,268 409,250,266 413,252,264 418,262,275 424,276,290 428,282,298 434,260,280 439,260,277 443,267,280 448,278,295 453,280,290 458,285,298 460,298,320 463,310,335 465,330,360 468,345,375 470,378,400 473,360,380 475,350,372 477,368,375 480,385,405 484,383,402 486,376,396 489,394,415 493,400,412 495,405,420 500,405,420 503,395,415 506,380,400 509,355,374 512,350,362 516,370,382 520,372,382 524,354,384 528,350,372 532,345,358 537,355,378 540,374,390 543,380,396 547,370,384 552,365,378 556,360,374 560,345,372 564,340,358 568,335,352 573,332,345 578,335,345 583,332,350 590,345,355 595,348,358 600,342,350 606,325,340 609,318,325 614,325,335 620,330,345 626,338,350 630,330,340 638,335,345 643,330,342 650,332,345 656,330,345 662,330,342 668,322,335 674,315,325 680,320,334 686,325,335 692,325,336 698,330,340 702,335,352 708,345,355 713,352,366 718,355,370 724,352,362 730,358,370 736,365,372 744,367,375 749,355,370 752,345,352 760,345,350 766,335,345 774,333,338 777,328,332 779,362,378 784,375,382 790,365,375 796,360,368 802,345,358 807,342,355 812,345,357 816,335,345 818,315,335 823,315,325 828,317,322 834,325,334 842,322,332 848,325,335 855,328,338 860,332,342 866,334,340 872,335,345 876,325,332 880,320,332 884,312,325 890,310,318 893,298,312 897,280,290 902,284,294 908,280,292 914,290,302 920,280,292 926,280,290 932,284,294 938,280,290 943,272,285 947,276,288 952,278,290 958,280,290 965,284,292 972,288,298 978,290,300 983,278,290 988,272,284 994,276,286 1000,278,285 1004,282,293 1008,280,290 1014,282,288 1022,270,280 1025,268,274 1028,258,274 1032,262,275 1036,268,280 1042,278,285 1050,282,287 1055,280,286 1058,245,268 1061,243,252 1064,248,255 1068,242,250 1073,228,240 1077,230,240 1082,226,236 1086,230,238 1090,240,250 1094,246,255 1100,240,250 1104,248,256 1108,236,248 1111,228,238 1116,224,234 1121,228,236 1126,229,236 1130,230,240 1136,225,235 1141,226,234 1146,228,234 1150,226,236 1153,218,230 1156,206,218 1159,200,215 1162,204,208`);

let shell = '', up = '', down = '';
const box = (x, y, w, h) => `M${x} ${y}h${w}v${h}h${-w}z`;
bars.forEach((bx, i) => {
    const x = Math.round(bx);
    const high = valueAt(ranges, bx, 1), low = valueAt(ranges, bx, 2);
    const size = low - high;
    const top = Math.round(high - rnd() * rnd() * 7);
    const bottom = Math.round(low + rnd() * rnd() * 5);
    const open = Math.round(high + size * rnd() * .35);
    const len = Math.max(1, Math.round((low - open) * (i % 3 === 0 ? .2 : .6 + rnd() * .4)));
    shell += box(x, top, 1, Math.min(bottom, 421) - top) + box(x - 1, open, 3, len);
    if (len > 3) {
        const rising = valueAt(ranges, bx + 2) < valueAt(ranges, bx - 2);
        const core = box(x, open + 1, 1, len - 2);
        if (rnd() < .75 ? rising : !rising) up += core; else down += core;
    }
});
shell += box(1028, 232, 1, 40);
add('price', 'path', { d: shell, fill: '#a09048' });
add('price', 'path', { d: up, fill: '#50e050' });
add('price', 'path', { d: down, fill: '#e06868' });

// levels and moving averages
line('price', 3, 150.5, 1316, 150.5, '#008000');
curve('price', parse(`235,225 250,229 270,237 290,244 310,253 330,259 345,264 360,265 382,265 400,269 420,271 440,273 457,277 475,285 495,297 510,308 530,315 548,322 568,327 590,331 615,337 640,343 665,349 690,354 705,354 720,351 735,348 760,346 780,344 810,346 830,343 880,342 900,340 925,336 950,329 975,320 1010,312 1030,304 1060,297 1085,288 1105,280 1130,270 1145,265 1162,260`), '#e06868', 2);
curve('price', parse(`118,197 128,206 138,217 150,226 165,232 180,236 195,244 210,249 225,251 238,251 250,247 265,244 282,247 298,254 315,257 330,266 345,275 362,281 375,286 390,290 410,290 430,288 445,284 460,284 475,292 492,307 502,318 512,326 528,340 545,353 560,366 570,372 580,373 595,370 608,364 622,353 640,349 655,344 670,338 685,336 700,335 715,335 730,340 750,345 775,347 790,350 805,355 818,356 835,352 848,347 860,343 880,340 895,336 910,327 930,315 950,308 975,299 995,290 1005,287 1025,284 1045,282 1065,280 1080,274 1095,267 1115,261 1130,253 1145,247 1155,244 1162,238`), '#686868', 2);
curve('price', parse(`47,180 55,183 62,190 70,196 80,200 88,201 100,205 112,209 120,216 125,223 132,236 140,248 150,257 158,261 172,262 182,251 192,248 205,248 218,247 228,246 238,242 250,240 262,241 272,246 282,253 290,260 298,268 308,274 318,280 326,287 340,291 355,296 364,299 372,292 380,290 400,288 408,281 422,280 432,278 440,275 447,274 455,279 462,288 470,300 480,319 488,337 495,360 502,382 507,392 525,392 532,385 545,375 553,367 565,365 575,359 585,355 595,348 612,340 625,340 640,336 655,335 668,337 680,331 700,330 712,336 725,345 735,352 743,359 752,362 765,360 780,352 792,352 805,353 820,353 828,348 840,337 850,331 862,328 872,332 885,333 895,326 905,316 915,307 925,298 935,289 945,286 962,284 980,286 1000,286 1015,282 1030,278 1056,277 1070,268 1085,253 1100,243 1115,238 1135,239 1150,232 1162,226`), '#0000f0', 2);
line('price', 3, 224.5, 1316, 224.5, '#f00');
line('price', 679, 421, 1316, 193, '#f00');

// drawings
line('price', 1168, 151.5, 1298, 151.5, '#fff');
line('price', 1168, 204.5, 1298, 204.5, '#fff');
line('price', 1167, 202, 1290, 154, '#ff0', { 'stroke-dasharray': '11 13' });
line('price', 828, 182, 1136, 216, '#fff', { 'stroke-width': 2 });
add('price', 'path', { d: 'M1134 210l10 6-10 6z', fill: '#fff' });
[[786, 391], [1056, 290], [1157, 231]].forEach(([x, y]) => {
    add('price', 'path', { d: `M${x} ${y}l6 6h-3v9h-5v-9h-4z`, fill: '#0f0' });
});

// volume
const peaks = { 34: 11, 51: 15, 53: 11, 36: 10, 120: 12, 100: 9, 151: 10, 438: 7, 467: 7, 526: 8, 587: 7, 770: 18, 817: 9, 1028: 61, 1058: 9, 1061: 7, 1037: 6, 1130: 5, 1132: 5 };
let volUp = '', volDown = '';
bars.forEach(bx => {
    const x = Math.round(bx);
    const busy = bx < 140 || (bx > 455 && bx < 545) ? 6 : 4;
    let h = 2 + Math.floor(rnd() * busy);
    for (const p in peaks) if (Math.abs(bx - p) < 1.226) h = peaks[p];
    const bar = box(h > 60 ? 1028 : x, 489 - h, 1, h);
    if (h > 60 || rnd() > .5 && h !== 18) volUp += bar; else volDown += bar;
});
add('volume', 'path', { d: volUp, fill: '#50e050' });
add('volume', 'path', { d: volDown, fill: '#e06868' });

// momentum
const mom = parse(`31,514 36,521 39,532 48,532 52,528 58,528 60,532 63,521 66,514 70,518 76,518 82,521 88,521 92,524 98,527 104,524 109,522 114,526 120,530 125,529 127,538 134,541 140,533 147,526 150,518 155,508 162,504 168,515 172,516 175,508 178,509 181,522 187,527 193,523 199,519 205,525 209,515 217,511 224,513 228,516 232,520 240,521 252,523 258,518 264,522 273,523 284,530 290,528 298,529 305,525 311,519 320,527 325,523 335,525 342,526 346,522 350,513 355,519 362,521 368,511 378,516 385,518 390,521 397,525 404,514 412,512 415,511 420,513 427,520 432,528 438,518 445,522 452,521 458,521 465,544 470,552 474,545 477,541 480,550 486,546 493,540 496,541 500,529 505,528 507,520 509,508 514,515 520,511 522,502 526,495 529,504 533,506 537,522 541,530 544,517 550,519 556,524 562,517 566,512 569,504 574,511 582,513 586,515 590,520 602,521 609,513 615,517 621,515 626,519 632,518 636,524 644,521 651,517 655,520 661,522 665,516 672,518 678,514 682,518 685,520 688,517 694,522 699,520 703,529 707,525 712,528 717,530 723,527 730,525 740,523 748,519 755,516 762,512 770,510 776,510 779,527 787,527 797,527 800,525 806,524 808,513 815,511 820,505 825,508 833,517 838,512 843,514 847,521 855,523 862,521 870,524 878,521 884,513 890,514 897,504 908,510 912,515 918,514 924,520 930,518 936,519 942,514 948,521 958,518 967,521 973,525 982,522 986,516 995,518 1002,515 1008,518 1016,521 1024,517 1030,512 1038,519 1046,519 1056,523 1059,513 1068,510 1076,506 1082,504 1087,518 1092,519 1101,525 1110,520 1118,515 1124,514 1128,516 1132,513 1140,519 1152,519 1156,514 1162,512`);
const clip = fn => mom.map(([x, y]) => [x, fn(y, 520.5)]);
add('momentum', 'polygon', { points: '31,520.5 ' + clip(Math.min).join(' ') + ' 1162,520.5', fill: '#002800' });
add('momentum', 'polygon', { points: '31,520.5 ' + clip(Math.max).join(' ') + ' 1162,520.5', fill: '#280000' });
for (let i = 1; i < mom.length; i++) {
    curve('momentum', [mom[i - 1], mom[i]], mom[i][1] > mom[i - 1][1] ? '#e06868' : '#a09048', 1);
}
line('momentum', 3, 520.5, 1316, 520.5, '#3030e0');

// rsi, with a little daily jitter between the turning points
const rsiPoints = parse(`36,592 39,597 45,590 58,590 60,594 64,588 70,588 74,585 80,590 88,592 92,596 94,592 98,598 102,588 107,593 110,587 116,596 122,602 128,610 131,606 135,611 140,596 146,593 148,590 152,584 160,582 166,586 172,590 176,578 179,576 181,589 188,592 194,590 200,584 206,580 214,581 222,578 228,581 232,589 238,586 243,589 250,586 256,585 260,588 264,592 272,592 278,597 282,604 290,598 298,602 302,592 307,593 313,589 317,597 322,604 328,590 334,589 340,594 346,592 351,587 357,590 365,587 369,574 373,583 380,585 386,591 392,590 398,582 406,568 412,581 418,582 424,589 430,592 434,582 440,580 446,588 452,590 458,591 463,603 470,613 473,602 479,606 485,601 490,605 494,603 498,610 500,597 506,592 510,581 516,588 522,586 528,580 534,582 540,593 545,586 552,586 558,582 564,579 569,576 576,577 582,576 590,584 596,584 602,580 605,574 610,570 614,580 622,589 628,581 634,586 640,581 646,585 652,588 657,580 660,587 668,582 674,575 680,585 688,585 694,588 697,583 702,593 708,591 716,599 722,594 728,596 733,599 738,595 745,597 750,586 754,579 762,578 767,573 770,576 777,573 779,599 787,599 792,595 800,588 805,579 810,583 814,584 818,569 824,567 829,576 836,581 840,577 846,582 850,578 856,588 863,586 872,591 878,583 882,572 890,575 896,562 902,573 907,569 914,578 920,570 926,575 932,578 940,573 944,573 948,579 953,577 957,586 962,581 966,584 974,591 982,584 989,574 994,581 1000,578 1003,590 1008,581 1014,584 1022,580 1028,568 1034,580 1040,588 1046,585 1052,591 1056,585 1058,568 1065,572 1072,566 1078,570 1084,569 1088,574 1091,586 1096,582 1100,585 1106,587 1113,574 1120,577 1128,581 1131,575 1138,580 1146,583 1151,582 1154,574 1159,566 1162,570`);
const rsi = bars.filter(x => x >= 36).map(x => [x, valueAt(rsiPoints, x) + rnd() * 3 - 1.5]);
add('rsi', 'polygon', { points: '36,616 ' + rsi.join(' ') + ' 1162,616', fill: '#000028' });
curve('rsi', rsi, '#a09048', 1);

// stochastic: %K and its 5 day average
const stochPoints = parse(`40,670 45,668 48,663 56,661 64,663 68,655 72,642 76,637 80,643 84,654 90,661 96,667 102,661 110,657 114,660 118,671 126,676 134,676 138,672 142,661 148,652 154,640 160,634 166,633 172,642 177,635 179,628 182,643 185,662 190,672 196,667 204,655 212,640 216,630 221,627 226,632 230,654 234,664 240,668 248,667 256,663 261,652 265,671 272,663 280,666 283,676 290,671 300,671 304,658 313,647 318,656 323,675 328,668 333,648 340,653 348,653 353,637 358,642 364,640 370,638 376,652 382,662 390,674 395,674 400,660 404,641 407,633 413,644 420,646 426,655 432,666 436,656 440,646 446,652 452,664 455,670 460,675 470,678 477,668 482,675 490,675 498,679 501,664 507,650 510,635 513,629 520,639 526,636 530,629 534,632 538,645 542,663 546,660 553,654 562,638 568,636 572,629 578,640 585,640 590,652 596,670 602,660 606,652 611,629 616,637 621,655 626,660 631,654 637,661 644,650 654,656 662,650 668,644 674,629 680,640 686,655 694,659 700,668 704,676 708,668 716,675 722,668 728,667 735,675 742,670 748,668 751,650 754,633 762,630 768,624 775,627 780,633 783,665 785,678 790,670 796,667 804,650 808,645 815,642 821,627 828,628 834,641 840,639 846,646 850,654 854,668 858,677 864,672 876,674 880,650 884,635 890,632 896,626 904,632 910,637 917,643 920,635 926,631 930,638 936,643 942,633 947,636 952,657 957,650 962,657 968,665 974,678 980,672 984,655 988,633 994,637 998,643 1007,656 1010,647 1017,654 1022,648 1026,631 1030,640 1034,656 1040,670 1048,674 1054,678 1058,665 1062,635 1070,631 1076,628 1084,627 1090,640 1094,660 1097,672 1102,662 1106,670 1110,658 1112,640 1117,631 1124,640 1130,641 1136,634 1142,636 1147,646 1150,646 1154,636 1158,628 1162,626`);
const k = bars.filter(x => x >= 38).map(x => [x, valueAt(stochPoints, x)]);
const d = k.map(([x], i) => {
    const last = k.slice(Math.max(0, i - 4), i + 1);
    return [x, last.reduce((sum, p) => sum + p[1], 0) / last.length];
});
for (let i = 1; i < k.length; i++) {
    const fill = k[i][1] > d[i][1] ? '#602828' : '#000028';
    add('stoch', 'polygon', { points: [k[i - 1], k[i], d[i], d[i - 1]].join(' '), fill });
}
curve('stoch', k, '#a09048', 1);
add('stoch', 'polyline', { points: d.slice(4).join(' '), fill: 'none', stroke: '#e06868', 'stroke-dasharray': '4 3' });
line('stoch', 3, 635.5, 1316, 635.5, '#3030e0');
line('stoch', 3, 669.5, 1316, 669.5, '#3030e0');

// notes over the price plot
document.querySelectorAll('.note').forEach(n => {
    n.style.left = (n.dataset.x - 3) / 1313 * 100 + '%';
    n.style.top = (n.dataset.y - 96) / 325 * 100 + '%';
});

// value axes
document.querySelectorAll('.axis').forEach(axis => {
    const put = (kind, item) => {
        const [y, text, cls] = item.split(':');
        const s = document.createElement('span');
        s.className = kind + (cls ? ' ' + cls : '');
        s.textContent = text;
        s.style.top = (y - axis.dataset.top) / axis.dataset.height * 100 + '%';
        axis.appendChild(s);
    };
    axis.dataset.ticks.split(' ').forEach(t => put('tick', t));
    axis.dataset.badges.split(' ').forEach(b => put('badge', b));
});

// time axis, November 2008 has only its tick because the date badge lies there
const months = 'Feb:54 Mar:104 Apr:148 May:200 Jun:249 Jul:298 Aug:352 Sep:402 Oct:453 :507 Dec:554 2009:603 Feb:652 Mar:699 Apr:751 May:798 Jun:845 Jul:896 Aug:950 Sep:1000 Oct:1051 Nov:1103 Dec:1152 2010:1204 Feb:1251 Mar:1297';
const timeAxis = document.getElementById('timeAxis');
function addMonth(text, x, cls) {
    const s = document.createElement('span');
    s.className = 'month ' + cls;
    s.textContent = text;
    s.style.left = (x - 2) / 1314 * 100 + '%';
    timeAxis.appendChild(s);
}
months.split(' ').forEach(m => {
    const [text, x] = m.split(':');
    addMonth(text, x, text.startsWith('20') ? 'year' : '');
});
addMonth('13 Nov 2008', 526, 'date');
```
